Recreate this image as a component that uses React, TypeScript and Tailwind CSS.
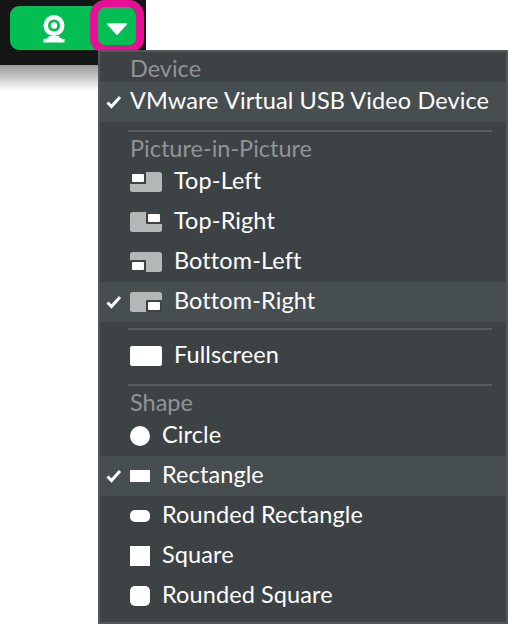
import React from "react";

const Check = () => (
  <svg width="16" height="14" viewBox="0 0 16 14" className="absolute left-[6px] top-[13px]">
    <path d="M1.5 7.5 L5.5 11.5 L14 2" fill="none" stroke="#ffffff" strokeWidth="3" />
  </svg>
);

const Row = ({
  label,
  icon,
  on,
}: {
  label: string;
  icon?: React.ReactNode;
  on?: boolean;
}) => (
  <div className={`relative flex h-[40px] items-center gap-[12px] pl-[30px] ${on ? "bg-[#474e50]" : ""}`}>
    {on && <Check />}
    {icon}
    <span className="-mt-[2px] whitespace-nowrap tracking-[0.1px] text-white">{label}</span>
  </div>
);

const Head = ({ label, cls }: { label: string; cls: string }) => (
  <div className={`pl-[30px] text-[#8f9596] ${cls}`}>{label}</div>
);

const Sep = ({ cls }: { cls: string }) => <div className={`ml-[28px] mr-[14px] h-[2px] bg-[#565d5e] ${cls}`} />;

const Shape = ({ cls }: { cls: string }) => (
  <div className="flex h-[20px] w-[20px] shrink-0 items-center justify-center">
    <div className={`bg-white ${cls}`} />
  </div>
);

const Corner = ({ c }: { c: "tl" | "tr" | "bl" | "br" }) => {
  const cut = {
    tl: { x: 0, y: 0 },
    tr: { x: 16, y: 0 },
    bl: { x: 0, y: 8 },
    br: { x: 16, y: 8 },
  }[c];
  return (
    <svg width="32" height="20" viewBox="0 0 32 20" className="shrink-0">
      <rect width="32" height="20" rx="2.5" fill="#b4b7b8" />
      <rect x={cut.x} y={cut.y} width="16" height="12" rx="1" fill="#3d4345" />
      <rect x={cut.x + 2} y={cut.y + 2} width="12" height="8" rx="1" fill="#ffffff" />
    </svg>
  );
};

export default function App() {
  return (
    <div className="relative h-[624px] w-[508px] overflow-hidden bg-white font-['Lato',sans-serif] text-[23.5px] leading-none">
      <div className="h-[65px] w-[146px] bg-[#141616] pl-[10px] pt-[6px]">
        <div className="relative flex h-[44px] w-[126px] rounded-[9px] bg-[#03bf53]">
          <div className="flex w-[88px] items-center justify-center">
            <svg width="26" height="30" viewBox="0 0 26 30">
              <circle cx="13" cy="12.5" r="10.5" fill="#fff" />
              <circle cx="13" cy="12.5" r="6" fill="#03bf53" />
              <circle cx="13" cy="12.5" r="3.2" fill="#fff" />
              <path d="M8 23 C 8 25 5 26 2.5 26 L 2.5 29.5 L 23.5 29.5 L 23.5 26 C 21 26 18 25 18 23 Z" fill="#fff" />
            </svg>
          </div>
          <div className="absolute -top-[6px] left-[80px] flex h-[53px] w-[54px] items-center justify-center rounded-[15px] border-[8px] border-t-[7px] border-[#e60f96]">
            <svg width="20" height="12" viewBox="0 0 20 12" className="mt-[6px]">
              <path d="M1 0 H19 a1 1 0 0 1 .7 1.7 L11 11.2 a1.4 1.4 0 0 1 -2 0 L.3 1.7 A1 1 0 0 1 1 0 Z" fill="#fff" />
            </svg>
          </div>
        </div>
      </div>
      <div className="h-[26px] w-[146px] bg-gradient-to-b from-[#9a9a9a] to-white" />

      <div className="absolute left-[98px] top-[50px] h-[574px] w-[410px] border-2 border-[#50585a] bg-[#3d4345]">
        <Head label="Device" cls="pt-[5px] h-[30px]" />
        <Row label="VMware Virtual USB Video Device" on />
        <Sep cls="mt-[8px]" />
        <Head label="Picture-in-Picture" cls="pt-[5px] h-[30px]" />
        <Row label="Top-Left" icon={<Corner c="tl" />} />
        <Row label="Top-Right" icon={<Corner c="tr" />} />
        <Row label="Bottom-Left" icon={<Corner c="bl" />} />
        <Row label="Bottom-Right" icon={<Corner c="br" />} on />
        <Sep cls="mt-[6px]" />
        <div className="mt-[6px]">
          <Row label="Fullscreen" icon={<div className="h-[20px] w-[32px] shrink-0 rounded-[2px] bg-white" />} />
        </div>
        <Sep cls="mt-[8px]" />
        <Head label="Shape" cls="pt-[5px] h-[30px]" />
        <Row label="Circle" icon={<Shape cls="h-[20px] w-[20px] rounded-full" />} />
        <Row label="Rectangle" icon={<Shape cls="h-[12px] w-[20px]" />} on />
        <Row label="Rounded Rectangle" icon={<Shape cls="h-[12px] w-[20px] rounded-[5px]" />} />
        <Row label="Square" icon={<Shape cls="h-[20px] w-[20px]" />} />
        <Row label="Rounded Square" icon={<Shape cls="h-[20px] w-[20px] rounded-[5px]" />} />
      </div>
    </div>
  );
}
